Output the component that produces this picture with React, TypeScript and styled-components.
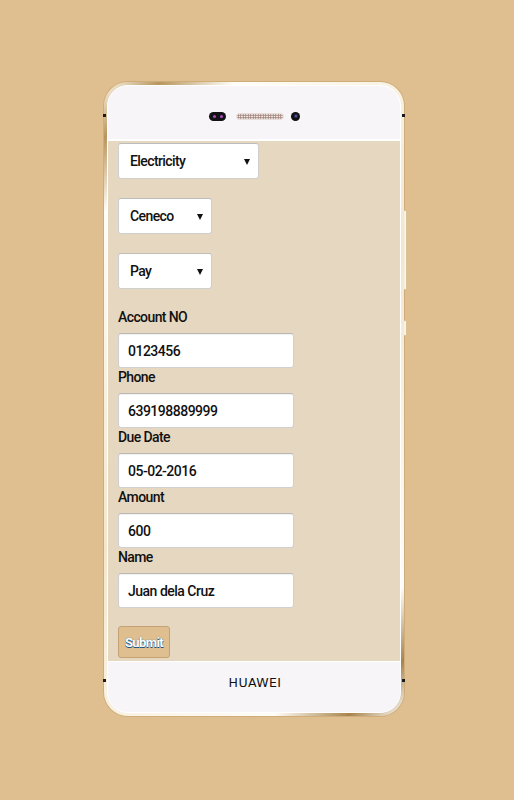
import React from "react";
import styled, {createGlobalStyle} from "styled-components";

const GlobalStyle = createGlobalStyle`
    html, body {
        margin: 0;
        padding: 0;
        background: #dfbf90;
    }
    * {
        box-sizing: border-box;
    }
`;

const Page = styled.div`
    width: 514px;
    height: 800px;
    padding: 82px 0 0 104px;
    font-family: Roboto, "Liberation Sans", sans-serif;
`;

const Phone = styled.div`
    position: relative;
    width: 300px;
    height: 634px;
    border-radius: 24px;
    padding: 3px;
    background: linear-gradient(135deg, #fffaf0 0%, #b8955c 6%, #fffdf8 14%, #f2e6cc 50%, #fffdf8 86%, #a8844c 94%, #fff 100%);
    box-shadow: 0 0 0 1px rgba(190, 155, 100, 0.5);
`;

const Body = styled.div`
    height: 100%;
    border-radius: 21px;
    background: #f7f5f8;
    border: 1px solid #ffffff;
    display: flex;
    flex-direction: column;
    overflow: hidden;
`;

const Antenna = styled.span<{ side: "left" | "right"; top: number }>`
    position: absolute;
    top: ${p => p.top}px;
    ${p => p.side}: -1px;
    width: 3px;
    height: 3px;
    background: #1a1a1a;
`;

const SideKey = styled.span<{ top: number; h: number }>`
    position: absolute;
    right: -3px;
    top: ${p => p.top}px;
    width: 3px;
    height: ${p => p.h}px;
    border-radius: 0 2px 2px 0;
    background: linear-gradient(to right, #f4ead8, #fffaf0);
    border: 1px solid #d8c29a;
    border-left: none;
`;

const TopBezel = styled.div`
    height: 55px;
    flex-shrink: 0;
    display: flex;
    align-items: center;
    justify-content: center;
    padding: 8px 0 0 1px;
    border-bottom: 2px solid #ffffff;
`;

const Camera = styled.div`
    width: 17px;
    height: 9px;
    border-radius: 5px;
    background: #121216;
    display: flex;
    align-items: center;
    justify-content: center;
    gap: 4px;
    margin-right: 10px;

    span {
        width: 3px;
        height: 3px;
        border-radius: 50%;
        background: #b04cb8;
    }
`;

const Speaker = styled.div`
    width: 48px;
    height: 7px;
    border-radius: 4px;
    background-color: #f0e8e4;
    background-image: radial-gradient(circle, #9a7a72 0.8px, transparent 1.1px);
    background-size: 2.5px 2.5px;
    border: 1px solid #e6dcd8;
    margin-right: 7px;
`;

const Sensor = styled.div`
    width: 9px;
    height: 9px;
    border-radius: 50%;
    background: radial-gradient(circle at 55% 45%, #6a72d8 0, #2a2a5a 1.5px, #111 2.5px);
`;

const Screen = styled.div`
    height: 520px;
    flex-shrink: 0;
    background: #e6d8c0;
    padding: 2px 10px 0 10px;
    overflow: hidden;
    display: flex;
    flex-direction: column;
    align-items: flex-start;

    & > * {
        flex-shrink: 0;
    }
`;

const SelectBox = styled.div<{ w: number }>`
    position: relative;
    width: ${p => p.w}px;
    height: 36px;
    margin-bottom: 19px;

    &::after {
        content: "";
        position: absolute;
        right: 9px;
        top: 16px;
        border-left: 3px solid transparent;
        border-right: 3px solid transparent;
        border-top: 6px solid #111;
        pointer-events: none;
    }
`;

const Select = styled.select`
    appearance: none;
    -webkit-appearance: none;
    display: block;
    width: 100%;
    height: 36px;
    border: 1px solid #cfcfcf;
    border-top-color: #bdbdbd;
    border-radius: 3px;
    background: #fff;
    padding: 0 0 0 11px;
    font-family: Roboto, "Liberation Sans", sans-serif;
    font-size: 14px;
    font-weight: 500;
    letter-spacing: -0.6px;
    color: #111;
    outline: none;
`;

const Field = styled.div`
    display: flex;
    flex-direction: column;
`;

const Label = styled.label`
    height: 18px;
    line-height: 18px;
    margin-bottom: 7px;
    font-size: 14px;
    font-weight: 500;
    letter-spacing: -0.6px;
    color: #111;
`;

const Input = styled.input`
    display: block;
    width: 176px;
    height: 35px;
    border: 1px solid #d0d0d0;
    border-top-color: #b8b8b8;
    border-radius: 3px;
    background: #fff;
    padding: 0 0 0 9px;
    font-family: Roboto, "Liberation Sans", sans-serif;
    font-size: 14px;
    font-weight: 500;
    letter-spacing: -0.5px;
    color: #111;
    box-shadow: inset 0 1px 1px rgba(0, 0, 0, 0.06);
    outline: none;
`;

const SubmitButton = styled.button`
    margin-top: 18px;
    width: 52px;
    height: 32px;
    padding: 0;
    border: 1px solid #c4a274;
    border-radius: 3px;
    background: #dfbf90;
    color: #fff;
    font-family: Roboto, "Liberation Sans", sans-serif;
    font-size: 13px;
    font-weight: 700;
    letter-spacing: -0.6px;
    text-shadow: 0 1px 0 #134f7f, 0 0 1px #1c5a8a;
`;

const BottomBezel = styled.div`
    flex: 1;
    display: flex;
    justify-content: center;
    padding-top: 14px;
    border-top: 1px solid #ffffff;
`;

const Brand = styled.span`
    font-family: "DejaVu Sans", sans-serif;
    font-size: 12.5px;
    font-weight: 400;
    letter-spacing: 0.4px;
    color: #111;
    line-height: 14px;
    margin-left: 2px;
`;

const fields = [
  {label: "Account NO", value: "0123456"},
  {label: "Phone", value: "639198889999"},
  {label: "Due Date", value: "05-02-2016"},
  {label: "Amount", value: "600"},
  {label: "Name", value: "Juan dela Cruz"},
];

const App: React.FC = () => {
  return (
    <Page>
      <GlobalStyle/>
      <Phone>
        <Antenna side="left" top={32}/>
        <Antenna side="right" top={32}/>
        <Antenna side="left" top={597}/>
        <Antenna side="right" top={597}/>
        <SideKey top={128} h={80}/>
        <SideKey top={238} h={16}/>
        <Body>
          <TopBezel>
            <Camera><span/><span/></Camera>
            <Speaker/>
            <Sensor/>
          </TopBezel>
          <Screen>
            <SelectBox w={141}>
              <Select defaultValue="Electricity">
                <option>Electricity</option>
                <option>Water</option>
              </Select>
            </SelectBox>
            <SelectBox w={94}>
              <Select defaultValue="Ceneco">
                <option>Ceneco</option>
              </Select>
            </SelectBox>
            <SelectBox w={94}>
              <Select defaultValue="Pay">
                <option>Pay</option>
              </Select>
            </SelectBox>
            {
              fields.map((f, i) => (
                <Field key={i}>
                  <Label>{f.label}</Label>
                  <Input defaultValue={f.value}/>
                </Field>
              ))
            }
            <SubmitButton>Submit</SubmitButton>
          </Screen>
          <BottomBezel>
            <Brand>HUAWEI</Brand>
          </BottomBezel>
        </Body>
      </Phone>
    </Page>
  );
};

export default App;
